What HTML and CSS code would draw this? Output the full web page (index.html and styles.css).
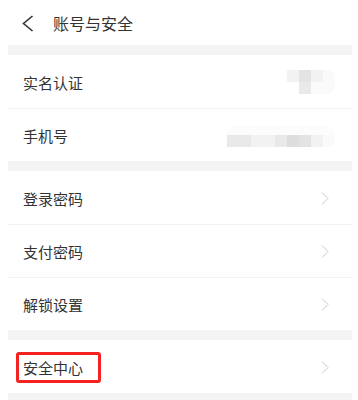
FILE: index.html
```html
<!DOCTYPE html>
<html lang="zh-CN">
<head>
<meta charset="utf-8">
<title>账号与安全</title>
<link rel="stylesheet" href="styles.css">
</head>
<body>
<header class="topbar">
  <svg class="back" width="12" height="17" viewBox="0 0 12 17"><polyline points="10.5,1 1.5,8.5 10.5,16" fill="none" stroke="#333" stroke-width="1.6"/></svg>
  <h1 class="title">账号与安全</h1>
</header>
<main class="list">
  <div class="band"></div>
  <section class="group">
    <div class="row">
      <span class="label">实名认证</span>
      <div class="mosaic m4">
        <i class="s2"></i><i class="s4"></i><i class="s2"></i><i class="s1 rt"></i>
        <i class="s0"></i><i class="s3"></i><i class="s1"></i><i class="s1 rb"></i>
      </div>
    </div>
    <div class="row">
      <span class="label">手机号</span>
      <div class="mosaic m9">
        <i class="f lt"></i><i class="f"></i><i class="f"></i><i class="f"></i><i class="f"></i><i class="f"></i><i class="f"></i><i class="f"></i><i class="f rt"></i>
        <i class="s3"></i><i class="s3"></i><i class="s2"></i><i class="s2"></i><i class="s3"></i><i class="s5"></i><i class="s4"></i><i class="s2"></i><i class="s1 rb"></i>
      </div>
    </div>
  </section>
  <div class="band"></div>
  <section class="group">
    <div class="row"><span class="label">登录密码</span><svg class="chev" width="8" height="13" viewBox="0 0 8 13"><polyline points="1,0.5 7,6.5 1,12.5" fill="none" stroke="#c9c9c9" stroke-width="1"/></svg></div>
    <div class="row"><span class="label">支付密码</span><svg class="chev" width="8" height="13" viewBox="0 0 8 13"><polyline points="1,0.5 7,6.5 1,12.5" fill="none" stroke="#c9c9c9" stroke-width="1"/></svg></div>
    <div class="row"><span class="label">解锁设置</span><svg class="chev" width="8" height="13" viewBox="0 0 8 13"><polyline points="1,0.5 7,6.5 1,12.5" fill="none" stroke="#c9c9c9" stroke-width="1"/></svg></div>
  </section>
  <div class="band"></div>
  <section class="group">
    <div class="row marked"><span class="label">安全中心</span><span class="highlight"></span><svg class="chev" width="8" height="13" viewBox="0 0 8 13"><polyline points="1,0.5 7,6.5 1,12.5" fill="none" stroke="#c9c9c9" stroke-width="1"/></svg></div>
  </section>
  <div class="band"></div>
</main>
</body>
</html>
```

FILE: styles.css
```css
html, body {
  margin: 0;
  padding: 0;
  background: #ffffff;
}
body {
  font-family: "Noto Sans CJK SC", "Noto Sans", sans-serif;
  color: #333333;
  width: 358px;
  height: 400px;
  overflow: hidden;
}
.topbar {
  height: 45px;
  display: flex;
  align-items: center;
  padding-left: 22px;
  box-sizing: border-box;
}
.back {
  display: block;
  margin-top: 1px;
}
.title {
  margin: 0 0 0 19px;
  font-size: 16px;
  font-weight: normal;
  color: #333;
  line-height: 1;
}
.list {
  margin: 0 6px 0 8px;
}
.band {
  height: 10px;
  background: #f4f4f4;
}
.group {
  background: #fff;
  padding-top: 1px;
}
.row {
  height: 52px;
  display: flex;
  align-items: center;
  justify-content: space-between;
  padding: 0 23px 0 15px;
  position: relative;
}
.row + .row {
  border-top: 1px solid #f2f2f2;
}
.label {
  font-size: 15px;
  color: #333;
  line-height: 1;
}
.chev {
  display: block;
}
.mosaic {
  display: grid;
  grid-auto-rows: 12px;
  margin-right: -6px;
}
.m4 {
  grid-template-columns: repeat(4, 12px);
}
.m9 {
  grid-template-columns: repeat(9, 12px);
  grid-template-rows: 9px 12px;
  margin-top: 3px;
}
.mosaic i {
  display: block;
}
.s0 { background: #ffffff; }
.s1 { background: #fafafa; }
.s2 { background: #f2f2f2; }
.s3 { background: #e9e9e9; }
.s4 { background: #e3e3e3; }
.s5 { background: #dddddd; }
.f { background: #fcfcfc; }
.rt { border-top-right-radius: 8px; }
.rb { border-bottom-right-radius: 8px; }
.lt { border-top-left-radius: 8px; }
.highlight {
  position: absolute;
  left: 8px;
  top: 11px;
  width: 85px;
  height: 31px;
  box-sizing: border-box;
  border: 3px solid #f52222;
  border-radius: 3px;
}
```
